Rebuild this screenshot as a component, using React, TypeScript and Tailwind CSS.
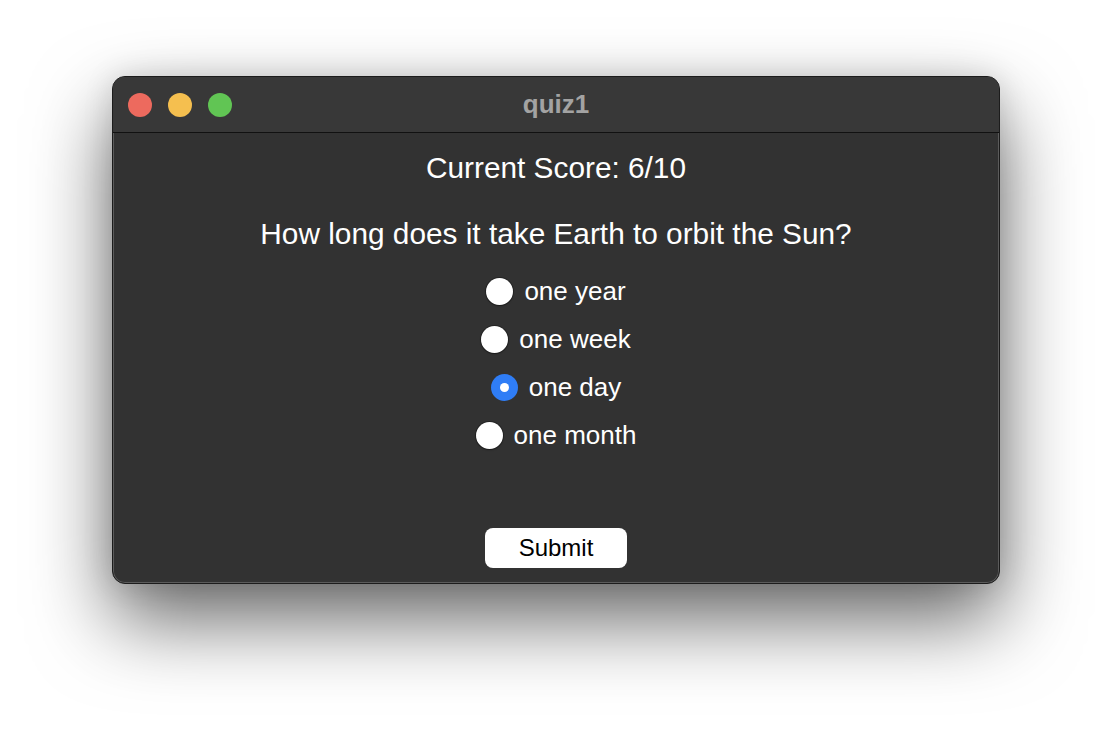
import React, { useState } from 'react';

const OPTIONS = ['one year', 'one week', 'one day', 'one month'];

function TrafficLights() {
  return (
    <div className="flex items-center gap-[16px]">
      <span className="w-[24px] h-[24px] rounded-full bg-[#ed6a5e]" />
      <span className="w-[24px] h-[24px] rounded-full bg-[#f5bf4f]" />
      <span className="w-[24px] h-[24px] rounded-full bg-[#61c554]" />
    </div>
  );
}

function Radio({ checked }: { checked: boolean }) {
  if (checked) {
    return (
      <span className="w-[27px] h-[27px] rounded-full bg-[#2f7df6] flex items-center justify-center shrink-0">
        <span className="w-[9px] h-[9px] rounded-full bg-white" />
      </span>
    );
  }
  return (
    <span className="w-[27px] h-[27px] rounded-full bg-white shadow-[0_0_0_1px_rgba(0,0,0,0.25),0_1px_2px_rgba(0,0,0,0.3)] shrink-0" />
  );
}

export default function App() {
  const [selected, setSelected] = useState('one day');

  return (
    <div
      className="w-[1112px] h-[732px] bg-white pt-[76px]"
      style={{ fontFamily: '"Liberation Sans", Arial, Helvetica, sans-serif' }}
    >
      {/* Window */}
      <div className="mx-auto w-[888px] h-[508px] rounded-[13px] bg-[#323232] border border-[#1c1c1c] shadow-[0_36px_80px_rgba(0,0,0,0.6),0_0_30px_rgba(0,0,0,0.12),inset_0_0_0_1px_rgba(255,255,255,0.2)] overflow-hidden flex flex-col">
        {/* Title bar */}
        <div className="relative h-[56px] bg-[#383838] border-b border-[#111111] flex items-center px-[15px] shrink-0">
          <TrafficLights />
          <div className="absolute inset-0 flex items-center justify-center text-[26px] font-bold text-[#a3a3a3] pointer-events-none">
            quiz1
          </div>
        </div>

        {/* Content */}
        <div className="flex-1 flex flex-col items-center text-white pt-[17px]">
          <div className="text-[29.8px] leading-[36px]">Current Score: 6/10</div>
          <div className="text-[29.8px] leading-[36px] mt-[30px]">
            How long does it take Earth to orbit the Sun?
          </div>

          <div className="mt-[15px] flex flex-col items-center">
            {OPTIONS.map((opt) => (
              <label
                key={opt}
                onClick={() => setSelected(opt)}
                className="h-[48px] flex items-center gap-[11px] text-[26px] cursor-default"
              >
                <Radio checked={selected === opt} />
                <span>{opt}</span>
              </label>
            ))}
          </div>

          <button className="mt-[69px] w-[142px] h-[40px] rounded-[8px] bg-white text-black text-[24px] leading-none flex items-center justify-center">
            Submit
          </button>
        </div>
      </div>
    </div>
  );
}
